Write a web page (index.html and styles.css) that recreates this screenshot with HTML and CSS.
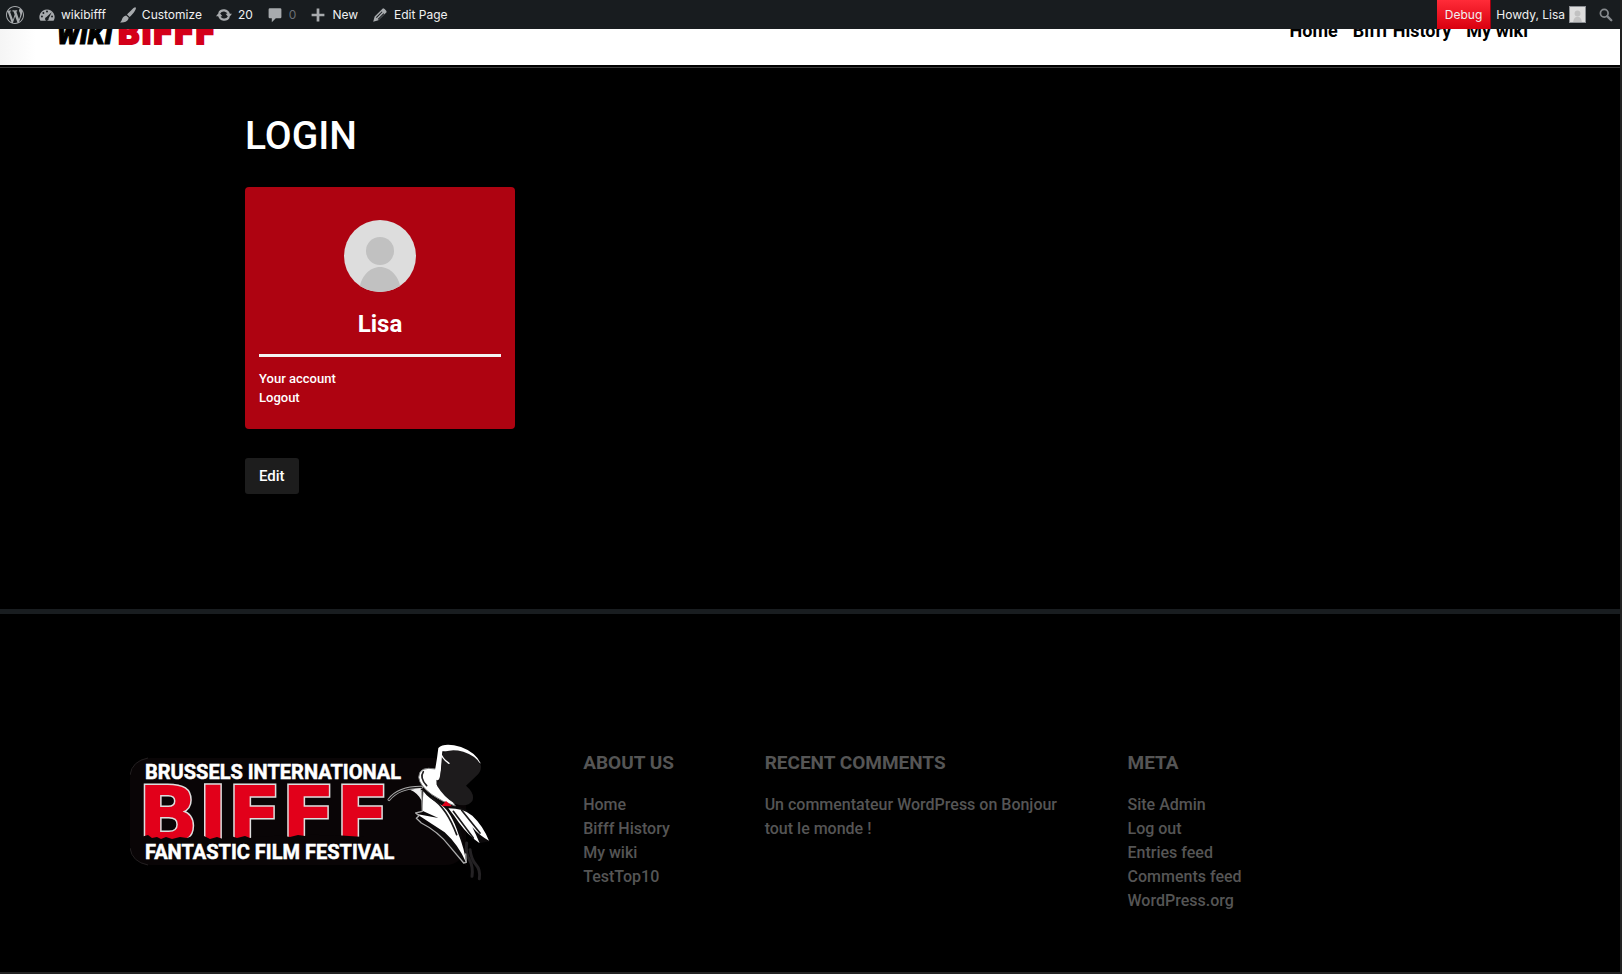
FILE: index.html
```html
<!DOCTYPE html>
<html lang="en">
<head>
<meta charset="utf-8">
<title>Login – wikibifff</title>
<link rel="stylesheet" href="styles.css">
</head>
<body>
<nav class="adminbar" aria-label="Toolbar">
  <a class="ab-item" href="#" aria-label="About WordPress">
    <svg class="ab-logo" viewBox="0 0 20 20"><path fill="currentColor" d="M20 10c0-5.51-4.49-10-10-10C4.48 0 0 4.49 0 10c0 5.52 4.48 10 10 10 5.51 0 10-4.48 10-10zM7.78 15.37L4.37 6.22c.55-.02 1.17-.08 1.17-.08.5-.06.44-1.13-.06-1.11 0 0-1.45.11-2.37.11-.18 0-.37 0-.58-.01C4.12 2.69 6.87 1.11 10 1.11c2.33 0 4.45.87 6.05 2.34-.68-.11-1.65.39-1.65 1.58 0 .74.45 1.36.9 2.1.35.61.55 1.36.55 2.46 0 1.49-1.4 5-1.4 5l-3.03-8.37c.54-.02.82-.17.82-.17.5-.05.44-1.25-.06-1.22 0 0-1.44.12-2.38.12-.87 0-2.33-.12-2.33-.12-.5-.03-.56 1.2-.06 1.22l.92.08 1.26 3.41zM17.41 10c.24-.64.74-1.87.43-4.25.7 1.29 1.05 2.71 1.05 4.25 0 3.29-1.73 6.24-4.4 7.78.97-2.59 1.94-5.2 2.92-7.78zM6.1 18.09C3.12 16.65 1.11 13.53 1.11 10c0-1.3.23-2.48.72-3.59C3.25 10.3 4.67 14.2 6.1 18.09zm4.03-6.63l2.58 6.98c-.86.29-1.76.45-2.71.45-.79 0-1.57-.11-2.29-.33.81-2.38 1.62-4.74 2.42-7.1z"/></svg>
  </a>
  <a class="ab-item" href="#">
    <svg class="ab-icon" viewBox="0 0 20 20"><path fill="currentColor" fill-rule="evenodd" d="M10 3a9.500 9.500 0 0 0-8.200 14.300h16.400A9.500 9.500 0 0 0 10 3zM10 4.500a1.200 1.200 0 1 1 0 2.400 1.200 1.200 0 0 1 0-2.400zM5.500 6.300a1.200 1.200 0 1 1 0 2.400 1.200 1.200 0 0 1 0-2.400zM15.800 6.500L12 14.500a2.200 2.200 0 1 1-3-1.700zM3.700 10.700a1.200 1.200 0 1 1 0 2.400 1.200 1.200 0 0 1 0-2.400zM16.300 10.700a1.200 1.200 0 1 1 0 2.400 1.200 1.200 0 0 1 0-2.400z"/></svg>
    <span>wikibifff</span>
  </a>
  <a class="ab-item" href="#">
    <svg class="ab-icon" viewBox="0 0 20 20"><path fill="currentColor" d="M19.500.600c.900.900.300 2.500-1.200 4.600-1.800 2.600-4.600 5.900-6.300 7.300l-3.200-3C10.300 7.600 13.300 4.700 15.600 2.500 17.300.900 18.700-.100 19.500.600zM7.700 10.500l3.200 3c-.3 1.300-.7 2.600-2 3.700C6.800 19.100 3 19.500 0 19.500c1.400-1 1.900-2.300 2.600-4.400.9-2.700 2.500-4.100 5.100-4.600z"/></svg>
    <span>Customize</span>
  </a>
  <a class="ab-item" href="#" aria-label="20 updates available">
    <svg class="ab-icon" viewBox="0 0 20 20"><path fill="none" stroke="currentColor" stroke-width="2.800" d="M4 7.500a6.500 6.500 0 0 1 12 1.500M16 12.500a6.500 6.500 0 0 1-12-1.500"/><path fill="currentColor" d="M12 8.500h8L16 13.500zM0 11.500h8L4 6.500z"/></svg>
    <span>20</span>
  </a>
  <a class="ab-item" href="#" aria-label="0 comments">
    <svg class="ab-icon" viewBox="0 0 20 20"><path fill="currentColor" d="M3.500 1.500h13A1.500 1.500 0 0 1 18 3v9.500a1.500 1.500 0 0 1-1.500 1.500H11l-5 5v-5H3.500A1.500 1.500 0 0 1 2 12.500V3a1.500 1.500 0 0 1 1.500-1.500z"/></svg>
    <span class="ab-muted">0</span>
  </a>
  <a class="ab-item" href="#">
    <svg class="ab-icon" viewBox="0 0 20 20"><path fill="currentColor" d="M8.300 2h3.400v6.300H18v3.400h-6.300V18H8.300v-6.300H2V8.300h6.300z"/></svg>
    <span>New</span>
  </a>
  <a class="ab-item" href="#">
    <svg class="ab-icon" viewBox="0 0 20 20"><path fill="currentColor" fill-rule="evenodd" d="M13.500 1.800c1-1 5.700 3.700 4.700 4.700L8 16.700 1.500 18.500 3.300 12zM5 12.700L12.200 5.500l.9.900-7.200 7.200zM7.200 14.900l7.200-7.200.9.900-7.200 7.200z"/></svg>
    <span>Edit Page</span>
  </a>
  <a class="ab-item ab-debug" href="#">Debug</a>
  <a class="ab-item ab-user" href="#">
    <span>Howdy, Lisa</span>
    <svg class="ab-avatar" viewBox="0 0 72 72"><rect width="72" height="72" fill="#ddd"/><circle cx="36" cy="31" r="14" fill="#c1c1c1"/><path fill="#c1c1c1" d="M15 72c1-16 11-25 21-25s20 9 21 25z"/></svg>
  </a>
  <button class="ab-search" type="button" aria-label="Search">
    <svg class="ab-glass" viewBox="0 0 20 20"><circle cx="7.500" cy="7.500" r="5.500" fill="none" stroke="currentColor" stroke-width="2.500"/><path stroke="currentColor" stroke-width="3.500" stroke-linecap="round" d="M12 12l5.500 5.500"/></svg>
  </button>
</nav>

<div class="page">
  <header class="site-header">
    <a class="brand" href="#" aria-label="WikiBifff">
      <svg class="brand-logo" viewBox="0 0 160 28">
        <text class="brand-wiki" x="-1" y="24">WIKI</text>
        <text class="brand-bifff" x="59" y="24">BIFFF</text>
      </svg>
    </a>
    <nav class="site-nav" aria-label="Main">
      <a href="#">Home</a>
      <a href="#">Bifff History</a>
      <a href="#">My wiki</a>
    </nav>
  </header>

  <main class="content">
    <h1 class="title">LOGIN</h1>
    <section class="card">
      <svg class="avatar" viewBox="0 0 72 72" role="img" aria-label="Lisa"><rect width="72" height="72" fill="#ddd"/><circle cx="36" cy="31" r="14" fill="#c1c1c1"/><path fill="#c1c1c1" d="M15 72c1-16 11-25 21-25s20 9 21 25z"/></svg>
      <h2 class="name">Lisa</h2>
      <ul class="links">
        <li><a href="#">Your account</a></li>
        <li><a href="#">Logout</a></li>
      </ul>
    </section>
    <a class="edit" href="#">Edit</a>
  </main>

  <footer class="footer">
    <div class="footer-logo">
      <svg class="festival" viewBox="1 0 364 144" role="img" aria-label="Brussels International Fantastic Film Festival">
        <rect x="1" y="14" width="336" height="107" rx="20" fill="#090506"/>
        <path fill="none" stroke="#242021" d="M1 31q2-14 18-17M1 104q2 14 18 17"/>
        <text class="festival-name" x="9" y="98">BIFFF</text>
        <path fill="#090506" d="M12 93l7-2 4 3 5-1 4 2 5-2 6 2 8-2 7 1 8-3 4 2 5-1 6 3 7-2 6 2 8-3 6 2 8-2 5 2 10-2 9 1 9-2 12 2 8-2 7 1 8-2 12 2 9-1 30 2v7H12z"/>
        <text class="festival-line" x="16" y="35">BRUSSELS INTERNATIONAL</text>
        <text class="festival-line" x="16" y="115">FANTASTIC FILM FESTIVAL</text>
        <g transform="translate(241 -11) scale(.33333)" stroke-linejoin="round" stroke-linecap="round">
          <path fill="none" stroke="#242224" stroke-width="9" d="M290 330q-4 30 8 50t8 50M300 350q4 30 18 45t10 42"/>
          <path fill="#0c0a0b" d="M160 170l80 40 50 20 70 95-30 5-60-60 20 130-130-150z"/>
          <path fill="#fff" d="M160 175q15 22 55 42 28 20 50 85 18 45 24 88-24-55-65-92-38-25-84-55l65 12-48-22z"/>
          <path fill="none" stroke="#aaa" stroke-width="4" d="M155 172l2 63-20 5 10 8-8 8 15 14q50 25 85 70l42 50 8-2-2-25"/>
          <path fill="#fff" d="M235 226q45 0 72 22 32 30 50 75-25-12-50-40 12 23 22 48-35-25-62-62-14-20-32-43z"/>
          <path fill="none" stroke="#1b191a" stroke-width="5" d="M250 235l60 80M275 232l55 68M185 195q45 30 75 110"/>
          <path fill="none" stroke="#aaa" stroke-width="9" d="M57 200q30-38 98-37"/>
          <path fill="none" stroke="#171516" stroke-width="4" d="M57 200q30-38 98-37"/>
          <path fill="#eee" d="M120 170l32-5 3 38q-12-24-35-33z"/>
          <path fill="#fff" stroke="#777" stroke-width="3" d="M198 108q-52-10-52 25 3 26 40 52 30 22 70 34l-10-18-45-45z"/>
          <path fill="none" stroke="#242224" stroke-width="5" d="M160 116q-12 18 10 42"/>
          <path fill="#fff" d="M205 45q18-18 68-3 44 16 60 50-50-38-116-37l-6 78q-4 16-20 3l10-60z"/>
          <path fill="#1d1b1c" d="M218 60q22-14 62-4 42 14 52 40 4 18-14 34l-30 28q28 24 19 46-15 20-52 8-32-18-54-54 14-32 17-98z"/>
          <path fill="none" stroke="#fff" stroke-width="4" d="M211 55q4 22 26 36"/>
          <path fill="#e2001a" d="M214 219l14-15 18 16z"/>
        </g>
      </svg>
    </div>
    <section class="col">
      <h3>ABOUT US</h3>
      <ul>
        <li><a href="#">Home</a></li>
        <li><a href="#">Bifff History</a></li>
        <li><a href="#">My wiki</a></li>
        <li><a href="#">TestTop10</a></li>
      </ul>
    </section>
    <section class="col">
      <h3>RECENT COMMENTS</h3>
      <ul>
        <li><a href="#">Un commentateur WordPress on Bonjour tout le monde !</a></li>
      </ul>
    </section>
    <section class="col">
      <h3>META</h3>
      <ul>
        <li><a href="#">Site Admin</a></li>
        <li><a href="#">Log out</a></li>
        <li><a href="#">Entries feed</a></li>
        <li><a href="#">Comments feed</a></li>
        <li><a href="#">WordPress.org</a></li>
      </ul>
    </section>
  </footer>
</div>
</body>
</html>
```
FILE: styles.css
```css
* { box-sizing: border-box; }
body {
  margin: 0;
  min-height: 100vh;
  display: flex;
  flex-direction: column;
  background: #000;
  border-right: 2px solid #222;
  border-bottom: 2px solid #222;
  font-family: Roboto, sans-serif;
  color: #fff;
}
a { color: inherit; text-decoration: none; }
h1, h2, h3, ul { margin: 0; padding: 0; }
ul { list-style: none; }
svg { display: block; flex: none; }

.adminbar {
  position: fixed;
  z-index: 10;
  top: 0;
  left: 0;
  right: 2px;
  height: 29px;
  display: flex;
  align-items: stretch;
  background: #181c1f;
  color: #f0f0f1;
  font: 400 12px Inter, sans-serif;
}
.ab-item {
  display: flex;
  align-items: center;
  gap: 6px;
  padding: 0 7px;
}
.ab-item:first-child { padding: 0 8px 0 6px; }
.ab-logo { width: 18px; height: 18px; color: #a7aaad; }
.ab-icon { width: 16px; height: 16px; color: #a7aaad; }
.ab-muted { color: #6b7075; }
.ab-debug {
  margin-left: auto;
  padding: 0 8px;
  border-right: 1px solid #a00010;
  background: linear-gradient(#ff2b38, #d9000f);
}
.ab-user { gap: 4px; padding: 0 6px 0 5px; }
.ab-avatar { width: 17px; height: 17px; border: 1px solid #8c8f94; }
.ab-search {
  padding: 0 7px;
  border: 0;
  background: none;
  color: #85898d;
}
.ab-glass { width: 14px; height: 14px; }

.page { flex: 1; display: flex; flex-direction: column; }
.site-header {
  display: flex;
  justify-content: space-between;
  align-items: flex-start;
  height: 68px;
  padding: 20px 92px 0 58px;
  background: linear-gradient(90deg, #f5f5f5, #fff 36px);
  border-bottom: 1px solid #3a3a3a;
  box-shadow: inset 0 -2px #000;
}
.brand-logo { width: 160px; height: 28px; overflow: visible; }
.brand-wiki { font: italic 900 27px Roboto, sans-serif; fill: #000; stroke: #000; }
.brand-bifff { font: 700 31px "DejaVu Sans", sans-serif; fill: #d4001a; stroke: #d4001a; stroke-width: 2px; }
.site-nav {
  display: flex;
  gap: 15px;
  color: #000;
  font-size: 18px;
  font-weight: 700;
  line-height: 22px;
}

.content {
  width: 100%;
  max-width: 1130px;
  margin: 0 auto;
  padding: 44px 0 115px;
}
.title {
  margin-bottom: 27px;
  font-size: 39px;
  font-weight: 500;
  line-height: 48px;
}
.card {
  width: 270px;
  margin-bottom: 29px;
  padding: 33px 14px 18px;
  border-radius: 4px;
  background: #ae0311;
}
.avatar { width: 72px; height: 72px; margin: 0 auto; border-radius: 50%; }
.name {
  padding: 16px 0 14px;
  border-bottom: 3px solid #f4f4f4;
  font-size: 24px;
  font-weight: 700;
  line-height: 32px;
  text-align: center;
}
.links {
  padding: 12px 0 4px;
  font-size: 13px;
  font-weight: 500;
  line-height: 19px;
}
.edit {
  display: inline-block;
  padding: 0 14px;
  border-radius: 3px;
  background: #1d1d1d;
  font-size: 15px;
  font-weight: 500;
  line-height: 36px;
}

.footer {
  flex: 1;
  display: grid;
  grid-template-columns: 5fr 2fr 4fr 4fr;
  padding: 130px 8% 40px;
  border-top: 5px solid #191d20;
  color: #555;
}
.festival { width: 364px; height: 144px; }
.festival-line { font: 700 20px Roboto, sans-serif; fill: #fff; stroke: #fff; stroke-width: .5px; }
.festival-name {
  font: 700 79px "DejaVu Sans", sans-serif;
  fill: #e2001a;
  stroke: #ddd;
  stroke-width: 3px;
  paint-order: stroke;
}
.col h3 {
  padding: 7px 0 18px;
  font-size: 19px;
  font-weight: 700;
  line-height: 24px;
}
.col ul {
  padding-right: 56px;
  font-size: 16px;
  font-weight: 500;
  line-height: 24px;
}
.col:nth-child(2) ul { padding-right: 0; }
```
